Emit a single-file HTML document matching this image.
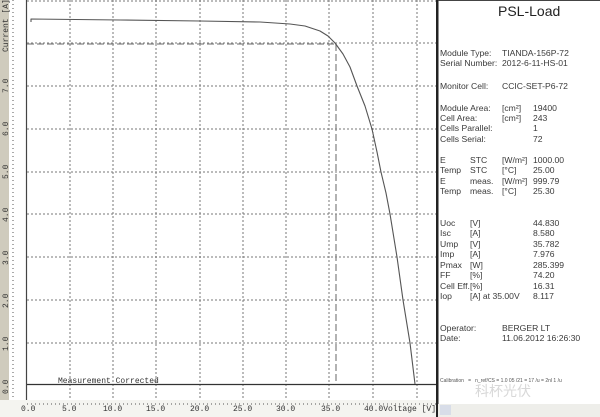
<!DOCTYPE html>
<html><head><style>
body{margin:0;width:600px;height:417px;overflow:hidden;background:#fff;position:relative;font-family:"Liberation Sans",sans-serif}
.t{position:absolute;font-size:8.6px;color:#3a3a3a;white-space:nowrap;line-height:10px}
.m{font-family:"Liberation Mono",monospace;font-size:8px;color:#333;position:absolute;white-space:nowrap}
.yl{position:absolute;font-family:"Liberation Mono",monospace;font-size:8px;color:#333;transform:rotate(-90deg);transform-origin:left top;white-space:nowrap}
</style></head><body>
<svg width="600" height="417" style="position:absolute;left:0;top:0">
<rect x="0" y="0" width="9" height="417" fill="#cfcbbd"/>
<rect x="0" y="400" width="437" height="17" fill="#f4f4f0"/>
<g stroke="#777" stroke-width="1" stroke-dasharray="2,2">
<line x1="70" y1="0" x2="70" y2="400"/><line x1="113" y1="0" x2="113" y2="400"/><line x1="156" y1="0" x2="156" y2="400"/><line x1="200" y1="0" x2="200" y2="400"/><line x1="243" y1="0" x2="243" y2="400"/><line x1="286" y1="0" x2="286" y2="400"/><line x1="329" y1="0" x2="329" y2="400"/><line x1="373" y1="0" x2="373" y2="400"/><line x1="417" y1="0" x2="417" y2="400"/>
<line x1="27" y1="1" x2="436" y2="1"/><line x1="27" y1="43" x2="436" y2="43"/><line x1="27" y1="86" x2="436" y2="86"/><line x1="27" y1="129" x2="436" y2="129"/><line x1="27" y1="172" x2="436" y2="172"/><line x1="27" y1="214" x2="436" y2="214"/><line x1="27" y1="257" x2="436" y2="257"/><line x1="27" y1="300" x2="436" y2="300"/><line x1="27" y1="343" x2="436" y2="343"/>
</g>
<g stroke="#555" stroke-width="1" stroke-dasharray="1,3"><line x1="13" y1="0" x2="13" y2="400"/><line x1="27" y1="404" x2="436" y2="404"/></g>
<line x1="26.5" y1="0" x2="26.5" y2="400" stroke="#444" stroke-width="1.2"/>
<line x1="27" y1="384.5" x2="436" y2="384.5" stroke="#333" stroke-width="1.2"/>
<g stroke="#888" stroke-width="1.3" stroke-dasharray="7,3" fill="none"><line x1="27" y1="44" x2="336" y2="44"/><line x1="336" y1="44" x2="336" y2="384"/></g>
<path d="M31 22 L31 19 L120 20 L200 21 L260 22 L290 24 L305 26 L320 31 L328 36 L335 43 L343 54 L350 67 L357 86 L365 106 L372 129 L377 152 L381 172 L386 193 L390 214 L397 257 L403 300 L410 343 L415 384" stroke="#555" stroke-width="1.1" fill="none" stroke-linejoin="round"/>
<rect x="436" y="0" width="2.5" height="417" fill="#222"/>
<line x1="438" y1="0.5" x2="600" y2="0.5" stroke="#444"/>
<rect x="438" y="404" width="162" height="13" fill="#eeeeea"/>
<rect x="440" y="405" width="11" height="10" fill="#d8dde8"/>
</svg>
<div class="yl" style="left:2px;top:52px">Current [A]</div>
<div class="yl" style="left:2px;top:93px">7.0</div>
<div class="yl" style="left:2px;top:136px">6.0</div>
<div class="yl" style="left:2px;top:179px">5.0</div>
<div class="yl" style="left:2px;top:222px">4.0</div>
<div class="yl" style="left:2px;top:265px">3.0</div>
<div class="yl" style="left:2px;top:308px">2.0</div>
<div class="yl" style="left:2px;top:351px">1.0</div>
<div class="yl" style="left:2px;top:394px">0.0</div>
<div class="m" style="left:58px;top:377px">Measurement Corrected</div>
<div class="m" style="left:21px;top:405px">0.0</div>
<div class="m" style="left:62px;top:405px">5.0</div>
<div class="m" style="left:103px;top:405px">10.0</div>
<div class="m" style="left:146px;top:405px">15.0</div>
<div class="m" style="left:190px;top:405px">20.0</div>
<div class="m" style="left:233px;top:405px">25.0</div>
<div class="m" style="left:276px;top:405px">30.0</div>
<div class="m" style="left:321px;top:405px">35.0</div>
<div class="m" style="left:364px;top:405px">40.0Voltage [V]</div>
<div class="t" style="left:498px;top:4px;font-size:14px;color:#222;line-height:15px">PSL-Load</div>
<div class="t" style="left:440px;top:48px">Module Type:</div><div class="t" style="left:502px;top:48px">TIANDA-156P-72</div>
<div class="t" style="left:440px;top:58px">Serial Number:</div><div class="t" style="left:502px;top:58px">2012-6-11-HS-01</div>
<div class="t" style="left:440px;top:81px">Monitor Cell:</div><div class="t" style="left:502px;top:81px">CCIC-SET-P6-72</div>
<div class="t" style="left:440px;top:103px">Module Area:</div><div class="t" style="left:502px;top:103px">[cm²]</div><div class="t" style="left:533px;top:103px">19400</div>
<div class="t" style="left:440px;top:113px">Cell Area:</div><div class="t" style="left:502px;top:113px">[cm²]</div><div class="t" style="left:533px;top:113px">243</div>
<div class="t" style="left:440px;top:123px">Cells Parallel:</div><div class="t" style="left:533px;top:123px">1</div>
<div class="t" style="left:440px;top:134px">Cells Serial:</div><div class="t" style="left:533px;top:134px">72</div>
<div class="t" style="left:440px;top:155px">E</div><div class="t" style="left:470px;top:155px">STC</div><div class="t" style="left:502px;top:155px">[W/m²]</div><div class="t" style="left:533px;top:155px">1000.00</div>
<div class="t" style="left:440px;top:165px">Temp</div><div class="t" style="left:470px;top:165px">STC</div><div class="t" style="left:502px;top:165px">[°C]</div><div class="t" style="left:533px;top:165px">25.00</div>
<div class="t" style="left:440px;top:176px">E</div><div class="t" style="left:470px;top:176px">meas.</div><div class="t" style="left:502px;top:176px">[W/m²]</div><div class="t" style="left:533px;top:176px">999.79</div>
<div class="t" style="left:440px;top:186px">Temp</div><div class="t" style="left:470px;top:186px">meas.</div><div class="t" style="left:502px;top:186px">[°C]</div><div class="t" style="left:533px;top:186px">25.30</div>
<div class="t" style="left:440px;top:218px">Uoc</div><div class="t" style="left:470px;top:218px">[V]</div><div class="t" style="left:533px;top:218px">44.830</div>
<div class="t" style="left:440px;top:228px">Isc</div><div class="t" style="left:470px;top:228px">[A]</div><div class="t" style="left:533px;top:228px">8.580</div>
<div class="t" style="left:440px;top:239px">Ump</div><div class="t" style="left:470px;top:239px">[V]</div><div class="t" style="left:533px;top:239px">35.782</div>
<div class="t" style="left:440px;top:249px">Imp</div><div class="t" style="left:470px;top:249px">[A]</div><div class="t" style="left:533px;top:249px">7.976</div>
<div class="t" style="left:440px;top:260px">Pmax</div><div class="t" style="left:470px;top:260px">[W]</div><div class="t" style="left:533px;top:260px">285.399</div>
<div class="t" style="left:440px;top:270px">FF</div><div class="t" style="left:470px;top:270px">[%]</div><div class="t" style="left:533px;top:270px">74.20</div>
<div class="t" style="left:440px;top:281px">Cell Eff.</div><div class="t" style="left:470px;top:281px">[%]</div><div class="t" style="left:533px;top:281px">16.31</div>
<div class="t" style="left:440px;top:291px">Iop</div><div class="t" style="left:470px;top:291px">[A] at 35.00V</div><div class="t" style="left:533px;top:291px">8.117</div>
<div class="t" style="left:440px;top:323px">Operator:</div><div class="t" style="left:502px;top:323px">BERGER LT</div>
<div class="t" style="left:440px;top:333px">Date:</div><div class="t" style="left:502px;top:333px">11.06.2012 16:26:30</div>
<div class="t" style="left:440px;top:376px;font-size:5px;color:#555">Calibration &nbsp; = &nbsp; n_ref/CS = 1.0 05 /21 = 17 /u = 2nl 1 /u</div>
<div class="t" style="left:475px;top:386px;font-size:14px;color:#d8d8d8">科杯光伏</div>
</body></html>
